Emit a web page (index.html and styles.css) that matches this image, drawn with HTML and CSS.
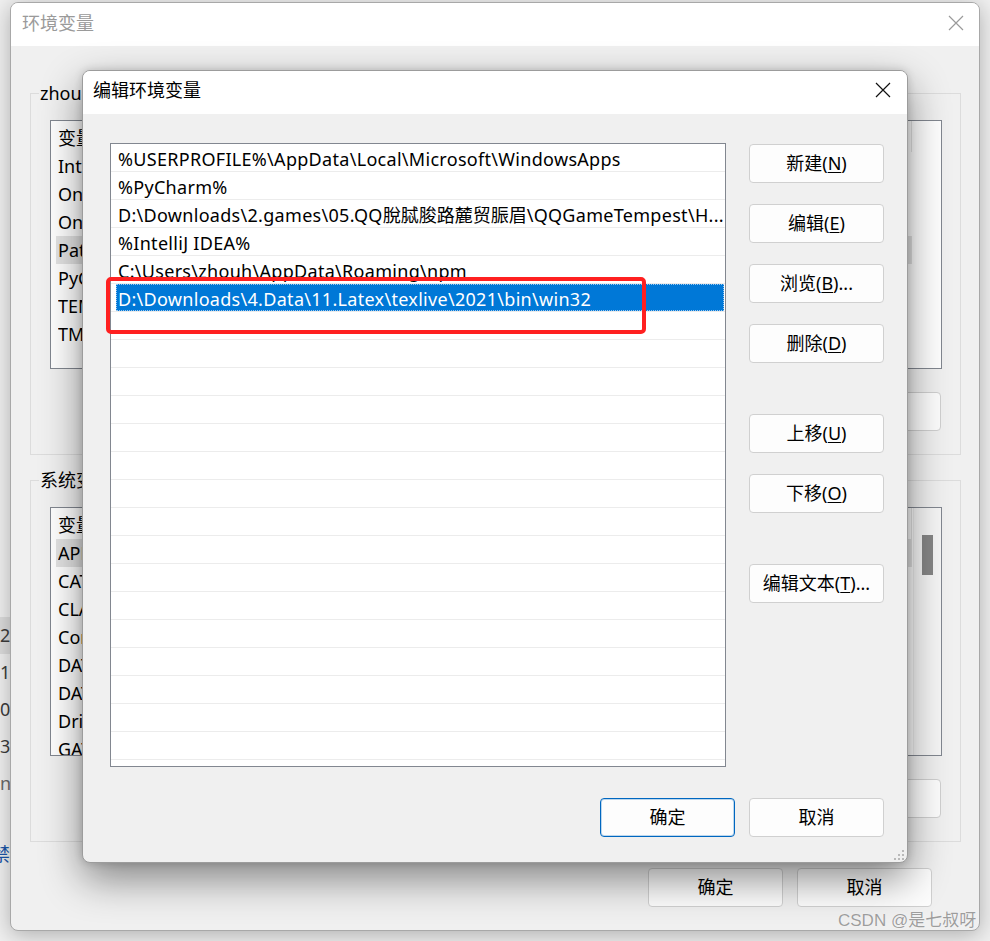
FILE: index.html
```html
<!DOCTYPE html>
<html lang="zh-CN">
<head>
<meta charset="utf-8">
<title>编辑环境变量</title>
<link rel="stylesheet" href="styles.css">
</head>
<body>
<div class="desktop">

  <div class="back">
    <div class="back-left">
      <div class="bl-row bl-sel">2</div>
      <div class="bl-row">1/</div>
      <div class="bl-row">0</div>
      <div class="bl-row">3</div>
      <div class="bl-row bl-dim">nc</div>
      <div class="bl-row bl-link">禁</div>
    </div>
  </div>

  <section class="env">
    <header class="env-title">
      <span class="env-title-text">环境变量</span>
      <span class="close close-dim">
        <svg width="16" height="16" viewBox="0 0 16 16"><path d="M1 1L15 15M15 1L1 15" stroke="currentColor" stroke-width="1.2" fill="none"/></svg>
      </span>
    </header>
    <div class="env-body">
      <div class="group">
        <div class="group-label">zhouh 的用户变量(<u>U</u>)</div>
        <div class="vlist">
          <div class="vlist-main">
            <div class="vhead"><span class="c1">变量</span><span class="c2">值</span></div>
            <div class="vrow"><span class="c1">IntelliJ IDEA</span><span class="c2">C:\Program Files\JetBrains\IntelliJ IDEA\bin;</span></div>
            <div class="vrow"><span class="c1">OneDrive</span><span class="c2">C:\Users\zhouh\OneDrive</span></div>
            <div class="vrow"><span class="c1">OneDriveConsumer</span><span class="c2">C:\Users\zhouh\OneDrive</span></div>
            <div class="vrow vrow-sel"><span class="c1">Path</span><span class="c2">%USERPROFILE%\AppData\Local\Microsoft\WindowsApps;</span></div>
            <div class="vrow"><span class="c1">PyCharm</span><span class="c2">C:\Program Files\JetBrains\PyCharm\bin;</span></div>
            <div class="vrow"><span class="c1">TEMP</span><span class="c2">%USERPROFILE%\AppData\Local\Temp</span></div>
            <div class="vrow"><span class="c1">TMP</span><span class="c2">%USERPROFILE%\AppData\Local\Temp</span></div>
          </div>
        </div>
        <div class="grp-btns">
          <button class="btn">新建(<u>N</u>)...</button>
          <button class="btn">编辑(<u>E</u>)...</button>
          <button class="btn">删除(<u>D</u>)</button>
        </div>
      </div>

      <div class="group group-2">
        <div class="group-label">系统变量(<u>S</u>)</div>
        <div class="vlist">
          <div class="vlist-main">
            <div class="vhead"><span class="c1">变量</span><span class="c2">值</span></div>
            <div class="vrow vrow-sel"><span class="c1">APPDATA_HOME</span><span class="c2">C:\ProgramData</span></div>
            <div class="vrow"><span class="c1">CATALINA_HOME</span><span class="c2">D:\tomcat</span></div>
            <div class="vrow"><span class="c1">CLASSPATH</span><span class="c2">.;%JAVA_HOME%\lib</span></div>
            <div class="vrow"><span class="c1">ComSpec</span><span class="c2">C:\Windows\system32\cmd.exe</span></div>
            <div class="vrow"><span class="c1">DATA_HOME</span><span class="c2">D:\Data</span></div>
            <div class="vrow"><span class="c1">DATA_PATH</span><span class="c2">D:\Data\bin</span></div>
            <div class="vrow"><span class="c1">DriverData</span><span class="c2">C:\Windows\System32\Drivers\DriverData</span></div>
            <div class="vrow"><span class="c1">GATEWAY</span><span class="c2">D:\gateway</span></div>
          </div>
          <div class="vscroll"><div class="vthumb"></div></div>
        </div>
        <div class="grp-btns">
          <button class="btn">新建(<u>W</u>)...</button>
          <button class="btn">编辑(<u>I</u>)...</button>
          <button class="btn">删除(<u>L</u>)</button>
        </div>
      </div>

      <div class="env-actions">
        <button class="btn">确定</button>
        <button class="btn">取消</button>
      </div>
    </div>
  </section>

  <section class="dlg">
    <header class="dlg-title">
      <span class="dlg-title-text">编辑环境变量</span>
      <span class="close close-dlg">
        <svg width="16" height="16" viewBox="0 0 16 16"><path d="M1 1L15 15M15 1L1 15" stroke="currentColor" stroke-width="1.2" fill="none"/></svg>
      </span>
    </header>
    <div class="dlg-body">
      <div class="plist">
        <div class="prow"><span class="ptext">%USERPROFILE%\AppData\Local\Microsoft\WindowsApps</span></div>
        <div class="prow"><span class="ptext">%PyCharm%</span></div>
        <div class="prow"><span class="ptext">D:\Downloads\2.games\05.QQ<span class="cjk">脫脦脧路麓贸脤眉</span>\QQGameTempest\H...</span></div>
        <div class="prow"><span class="ptext">%IntelliJ IDEA%</span></div>
        <div class="prow"><span class="ptext">C:\Users\zhouh\AppData\Roaming\npm</span></div>
        <div class="prow prow-sel"><span class="ptext">D:\Downloads\4.Data\11.Latex\texlive\2021\bin\win32</span></div>
        <div class="prow"></div><div class="prow"></div><div class="prow"></div><div class="prow"></div>
        <div class="prow"></div><div class="prow"></div><div class="prow"></div><div class="prow"></div>
        <div class="prow"></div><div class="prow"></div><div class="prow"></div><div class="prow"></div>
        <div class="prow"></div><div class="prow"></div><div class="prow"></div><div class="prow"></div>
        <div class="prow"></div>
      </div>
      <div class="side-btns">
        <button class="btn">新建(<u>N</u>)</button>
        <button class="btn">编辑(<u>E</u>)</button>
        <button class="btn">浏览(<u>B</u>)...</button>
        <button class="btn">删除(<u>D</u>)</button>
        <button class="btn btn-sep">上移(<u>U</u>)</button>
        <button class="btn">下移(<u>O</u>)</button>
        <button class="btn btn-sep">编辑文本(<u>T</u>)...</button>
      </div>
      <div class="dlg-actions">
        <button class="btn btn-default">确定</button>
        <button class="btn">取消</button>
      </div>
    </div>
    <svg class="grip" width="14" height="14" viewBox="0 0 14 14">
      <rect x="10" y="2" width="2" height="2"/>
      <rect x="6" y="6" width="2" height="2"/><rect x="10" y="6" width="2" height="2"/>
      <rect x="2" y="10" width="2" height="2"/><rect x="6" y="10" width="2" height="2"/><rect x="10" y="10" width="2" height="2"/>
    </svg>
  </section>

  <div class="annot"></div>
  <div class="watermark">CSDN @是七叔呀</div>
</div>
</body>
</html>
```

FILE: styles.css
```css
* { box-sizing: border-box; }

html, body {
  margin: 0;
  padding: 0;
}

body {
  width: 990px;
  height: 941px;
  overflow: hidden;
  font-family: "Noto Sans", "Noto Sans CJK SC", sans-serif;
  font-size: 18px;
  color: #000;
  background: #ececec;
}

u { text-decoration: underline; text-underline-offset: 2px; }

.desktop {
  position: relative;
  width: 990px;
  height: 941px;
  overflow: hidden;
}

/* back-most window */
.back {
  position: absolute;
  inset: 0;
  background: #f0f0f0;
}

.back-left {
  display: flex;
  flex-direction: column;
  padding-top: 617px;
  width: 40px;
}

.bl-row {
  height: 37px;
  line-height: 37px;
  color: #3c3c3c;
  white-space: nowrap;
}

.bl-sel { background: #dcdcdc; }
.bl-dim { color: #6a6a6a; }
.bl-link { margin-top: 34px; color: #1a56a8; margin-left: -8px; }

/* 环境变量 window */
.env {
  position: absolute;
  left: 10px;
  top: 2px;
  width: 970px;
  height: 929px;
  border: 1px solid #a8a8a8;
  border-radius: 8px;
  background: #f0f0f0;
  overflow: hidden;
  box-shadow: 0 4px 22px rgba(0, 0, 0, 0.28);
}

.env-title {
  height: 43px;
  background: #fff;
  display: flex;
  align-items: flex-start;
  padding: 6px 0 0 11px;
}

.env-title-text {
  line-height: 28px;
  color: #9a9a9a;
}

.close {
  margin-left: auto;
  display: flex;
  align-items: center;
  justify-content: center;
  height: 28px;
}

.close-dim { width: 46px; color: #9a9a9a; }

.env-body {
  padding: 47px 18px 0 19px;
  display: flex;
  flex-direction: column;
}

.group {
  position: relative;
  height: 362px;
  border: 1px solid #dcdcdc;
  padding: 26px 18px 0 19px;
  display: flex;
  flex-direction: column;
}

.group-2 { margin-top: 25px; }

.group-label {
  position: absolute;
  top: -13px;
  left: 8px;
  line-height: 24px;
  padding: 0 1px;
  background: #f0f0f0;
  white-space: nowrap;
}

.vlist {
  height: 249px;
  border: 1px solid #828790;
  background: #fff;
  display: flex;
  overflow: hidden;
}

.vlist-main {
  flex: 1;
  overflow: hidden;
}

.vhead {
  height: 31px;
  display: flex;
  align-items: center;
  padding-left: 7px;
  width: 861px;
  border-right: 1px solid #e5e5e5;
}

.vrow {
  height: 28px;
  line-height: 28px;
  display: flex;
  margin-left: 5px;
  padding-left: 2px;
  width: 856px;
  white-space: nowrap;
  overflow: hidden;
}

.c1 { width: 236px; flex: none; overflow: hidden; }
.c2 { flex: 1; overflow: hidden; }

.vrow-sel { background: #e3e3e3; }

.vscroll {
  width: 28px;
  flex: none;
  background: #f6f6f6;
  border-left: 1px solid #ededed;
  padding: 27px 0 0 8px;
}

.vthumb {
  width: 11px;
  height: 40px;
  background: #868686;
}

.grp-btns {
  display: flex;
  justify-content: flex-end;
  gap: 14px;
  margin-top: 23px;
  padding-right: 1px;
}

.btn {
  width: 135px;
  height: 39px;
  border: 1px solid #d0d0d0;
  border-radius: 4px;
  background: #fdfdfd;
  font-family: "Noto Sans", "Noto Sans CJK SC", sans-serif;
  font-size: 18px;
  color: #000;
  padding: 0;
  line-height: 37px;
  text-align: center;
  white-space: nowrap;
}

.env-actions {
  display: flex;
  justify-content: flex-end;
  gap: 14px;
  margin-top: 26px;
  padding-right: 29px;
}

/* 编辑环境变量 dialog */
.dlg {
  position: absolute;
  left: 82px;
  top: 70px;
  width: 826px;
  height: 793px;
  border: 1px solid #9c9c9c;
  border-radius: 8px;
  background: #f0f0f0;
  overflow: hidden;
  box-shadow: 0 16px 40px rgba(0, 0, 0, 0.45), 0 0 8px rgba(0, 0, 0, 0.16);
}

.dlg-title {
  height: 43px;
  background: #fff;
  display: flex;
  align-items: flex-start;
  padding: 5px 0 0 10px;
}

.dlg-title-text { line-height: 28px; }

.close-dlg { width: 48px; color: #111; }

.dlg-body {
  display: grid;
  grid-template-columns: 616px 135px;
  column-gap: 23px;
  padding: 29px 23px 0 27px;
}

.plist {
  height: 624px;
  border: 1px solid #828790;
  background: #fff;
  overflow: hidden;
}

.prow {
  height: 28px;
  border-bottom: 1px solid #ececec;
  display: flex;
  overflow: hidden;
}

.ptext {
  padding: 1px 0 0 7px;
  line-height: 28px;
  letter-spacing: 0.3px;
  white-space: nowrap;
  overflow: hidden;
}

.cjk { letter-spacing: 0; }

.prow-sel .ptext {
  flex: 1;
  margin: 0 1px 0 5px;
  padding-left: 2px;
  background: #0078d7;
  color: #fff;
  outline: 1px dotted #9cc8f0;
  outline-offset: -1px;
}

.side-btns {
  display: flex;
  flex-direction: column;
  gap: 21px;
  padding-top: 1px;
}

.btn-sep { margin-top: 30px; }

.dlg-actions {
  grid-column: 1 / 3;
  display: flex;
  justify-content: flex-end;
  gap: 14px;
  margin-top: 31px;
}

.btn-default {
  border: 1px solid #0067c0;
  box-shadow: inset 0 0 0 1px rgba(0, 103, 192, 0.25);
}

.grip {
  position: absolute;
  right: 1px;
  bottom: 0;
  fill: #b9b9b9;
}

/* annotation and watermark overlays */
.annot {
  position: absolute;
  left: 106px;
  top: 277px;
  width: 540px;
  height: 57px;
  border: 4px solid #ff2020;
  border-radius: 5px;
}

.watermark {
  position: absolute;
  left: 838px;
  top: 908px;
  font-family: "Liberation Sans", "Noto Sans CJK SC", sans-serif;
  font-size: 17px;
  line-height: 26px;
  color: rgba(140, 140, 140, 0.85);
  text-shadow: 0 0 1px rgba(255, 255, 255, 0.9);
  white-space: nowrap;
}
```
